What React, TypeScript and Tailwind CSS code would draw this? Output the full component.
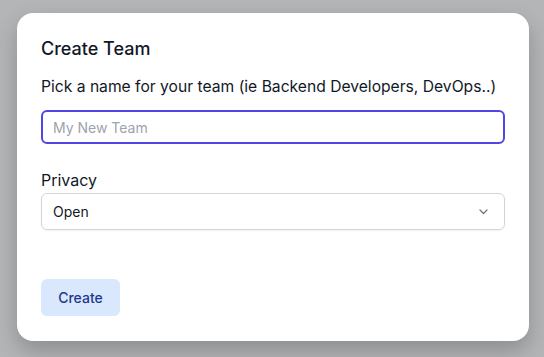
import React from "react";

export default function App() {
  return (
    <div
      className="w-[544px] h-[357px] bg-[#b4b5b7] pt-[13px] pl-[17px] overflow-hidden"
      style={{ fontFamily: "Inter, 'Noto Sans', sans-serif" }}
    >
      <div className="w-[512px] h-[328px] bg-white rounded-2xl shadow-[0_10px_22px_rgba(0,0,0,0.22)] px-6 pt-6 flex flex-col">
        <h2 className="text-[18px] leading-[24px] font-medium text-[#111827]">Create Team</h2>
        <label className="mt-[14px] text-[15.65px] leading-[24px] text-[#111827] whitespace-nowrap">
          Pick a name for your team (ie Backend Developers, DevOps..)
        </label>
        <input
          className="mt-[11px] h-[34px] w-full rounded-md border-2 border-[#4f46e5] px-[10px] text-[14px] text-[#111827] placeholder:text-[#9ca3af] outline-none"
          placeholder="My New Team"
        />
        <label className="mt-[24px] text-[16px] leading-[24px] text-[#111827]">Privacy</label>
        <div className="mt-[1px] h-[37px] w-full rounded-md border border-[#d1d5db] flex items-center justify-between pl-[11px] pr-[16px] shadow-[0_1px_2px_rgba(0,0,0,0.05)]">
          <span className="text-[14px] text-[#111827]">Open</span>
          <svg width="9" height="6" viewBox="0 0 9 6" fill="none">
            <path d="M1 1l3.5 3.5L8 1" stroke="#6b7280" strokeWidth="1.2" strokeLinecap="round" strokeLinejoin="round" />
          </svg>
        </div>
        <div className="mt-[49px]">
          <button className="h-[37px] w-[79px] rounded-md bg-[#d9e8fd] text-[14px] font-medium text-[#1e3a8a]">
            Create
          </button>
        </div>
      </div>
    </div>
  );
}
